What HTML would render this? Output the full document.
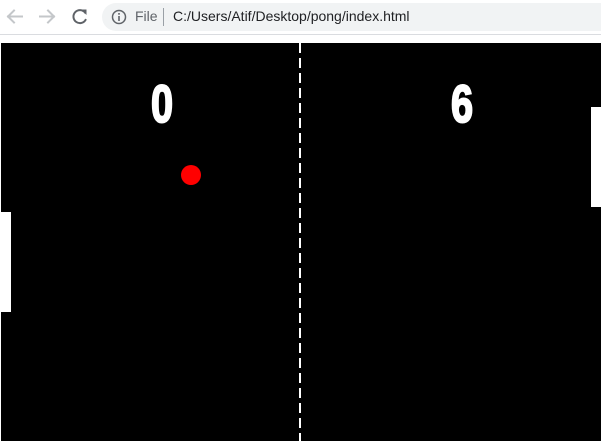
<!DOCTYPE html>
<html><head><style>
html,body{margin:0;padding:0;width:601px;height:441px;overflow:hidden;background:#fff;font-family:"Liberation Sans",sans-serif}
.bar{position:absolute;left:0;top:0;width:601px;height:34px;background:#fff}
.line{position:absolute;left:0;top:34px;width:601px;height:1px;background:#dadce0}
.omni{position:absolute;left:102px;top:3px;width:520px;height:28px;border-radius:14px;background:#f1f3f4}
.txt{position:absolute;top:8px;font-size:14px;color:#202124}
.cv{position:absolute;left:1px;top:43px;width:600px;height:398px;background:#000;overflow:hidden}
.score{position:absolute;top:35px;color:#fff;font-weight:bold;font-size:53px;line-height:53px;transform:scaleX(0.75);transform-origin:left top;-webkit-text-stroke:2px #fff}
</style></head><body>
<div class="bar">
<svg width="100" height="34" style="position:absolute;left:0;top:0">
<g fill="none" stroke-width="2" stroke-linecap="square">
<path d="M22 16.5H8M14 10.5L8 16.5L14 22.5" stroke="#c4c7ca"/>
<path d="M40 16.5H54M48 10.5L54 16.5L48 22.5" stroke="#c4c7ca"/>
<path d="M85 12.5A6.5 6.5 0 1 0 85.5 20" stroke="#5f6368"/>
</g>
<path d="M81 9.5H86.5V15Z" fill="#5f6368"/>
</svg>
<div class="omni"></div>
<svg width="16" height="16" style="position:absolute;left:111px;top:9px"><circle cx="8" cy="8" r="6.5" fill="none" stroke="#5f6368" stroke-width="1.5"/><rect x="7.2" y="7" width="1.6" height="5" fill="#5f6368"/><rect x="7.2" y="4" width="1.6" height="1.7" fill="#5f6368"/></svg>
<div class="txt" style="left:135px;color:#5f6368">File</div>
<div style="position:absolute;left:163px;top:8px;width:1px;height:18px;background:#9aa0a6"></div>
<div class="txt" style="left:173px">C:/Users/Atif/Desktop/pong/index.html</div>
</div>
<div class="line"></div>
<div class="cv">
<div style="position:absolute;left:298px;top:0;width:2px;height:398px;background:repeating-linear-gradient(#fff 0 10px,transparent 10px 15px)"></div>
<div class="score" style="left:150px">0</div>
<div class="score" style="left:450px">6</div>
<div style="position:absolute;left:180px;top:122px;width:20px;height:20px;border-radius:50%;background:#f00"></div>
<div style="position:absolute;left:-1px;top:169px;width:11px;height:100px;background:#fff"></div>
<div style="position:absolute;left:590px;top:64px;width:10px;height:100px;background:#fff"></div>
</div>
</body></html>
